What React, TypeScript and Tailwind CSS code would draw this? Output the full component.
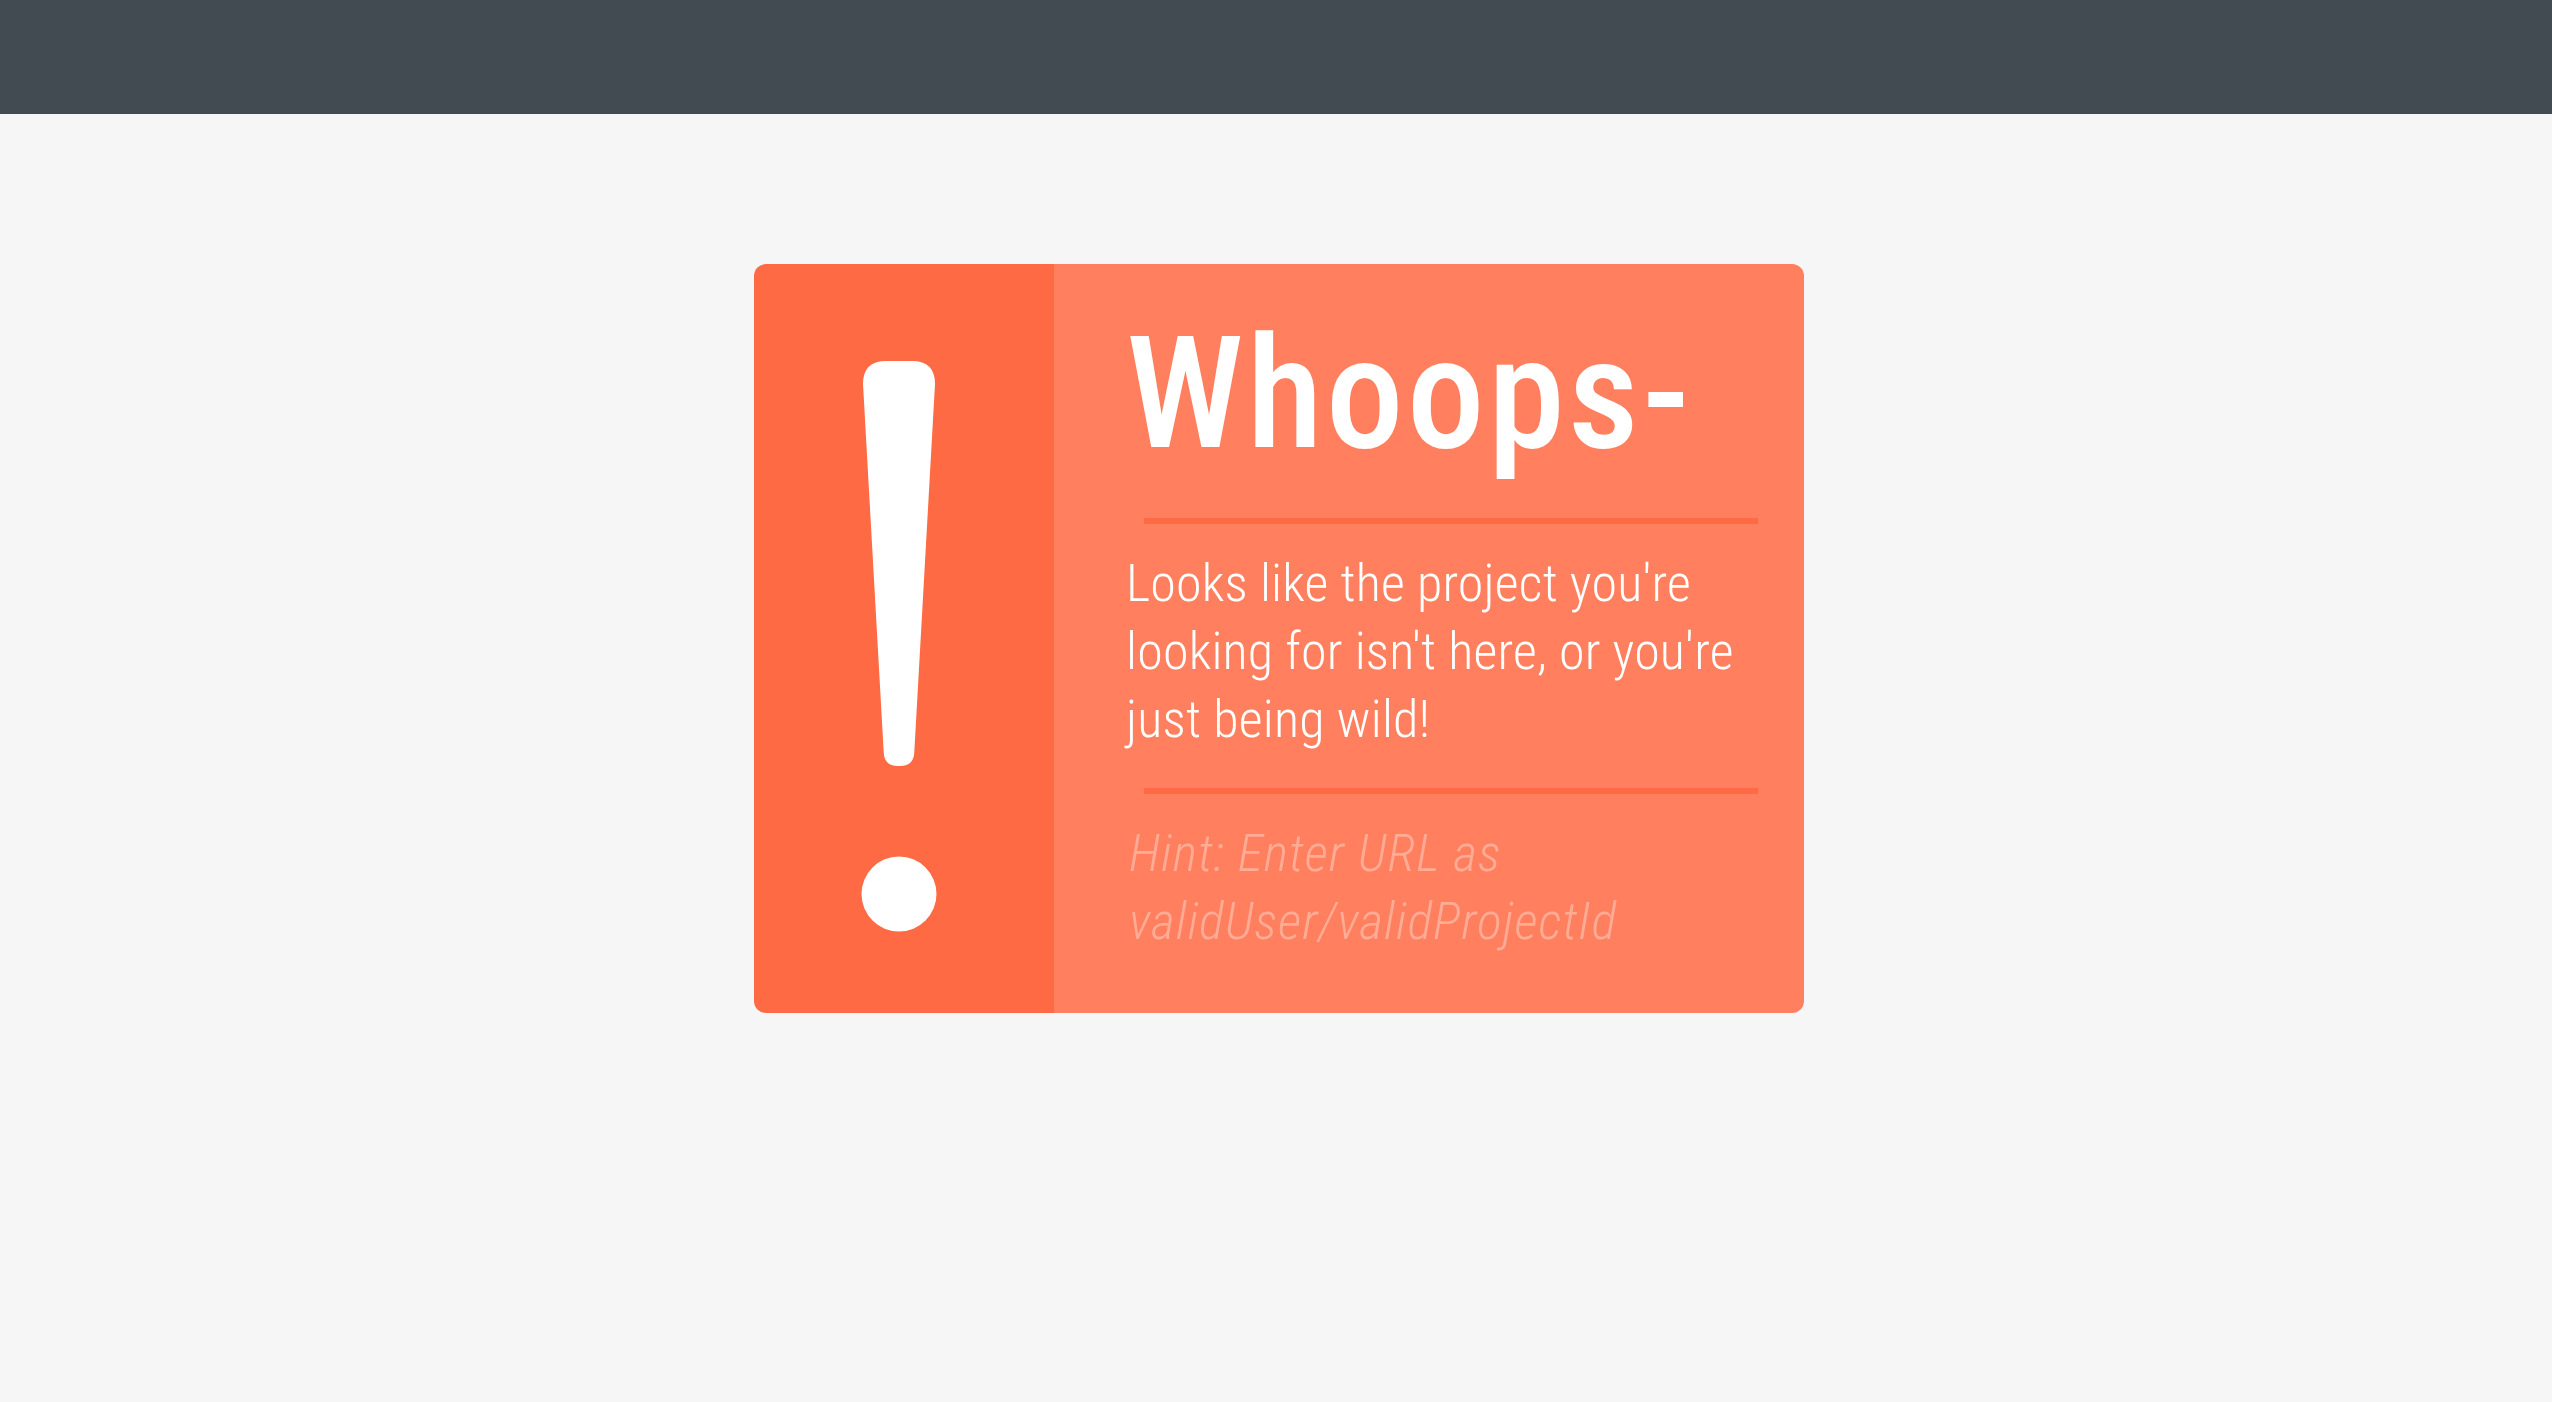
import React from "react";

const FONT = { fontFamily: '"Roboto Condensed", Roboto, "Liberation Sans", sans-serif' };

function ExclamationMark() {
  return (
    <svg width="76" height="571" viewBox="0 0 76 571" fill="#ffffff" aria-hidden="true">
      <path d="M2 23 Q2 0 25 0 L51 0 Q74 0 74 23 L53.3 391 Q53 405 39 405 L37 405 Q23 405 22.7 391 Z" />
      <circle cx="38" cy="533" r="37.5" />
    </svg>
  );
}

function Divider() {
  return <div className="mx-[18px] h-[6px] bg-[#fd6a43]" />;
}

export default function App() {
  return (
    <div className="min-h-screen bg-[#f6f6f6]" style={FONT}>
      <header className="h-[114px] bg-[#414b51]" />

      <main className="flex justify-center pl-[6px] pt-[150px]">
        <div className="flex w-[1050px] overflow-hidden rounded-[12px]">
          <div className="flex w-[300px] shrink-0 justify-center bg-[#fd6a43] pr-[10px] pt-[97px]">
            <ExclamationMark />
          </div>

          <div className="flex flex-1 flex-col bg-[#ff7f5e] pb-[57px] pl-[72px] pr-[28px] pt-[50px] text-white">
            <h1 className="text-[156px] font-medium leading-[160px] tracking-[3px]">Whoops-</h1>

            <div className="mt-[44px]">
              <Divider />
            </div>

            <p className="mt-[26px] text-[52px] font-light leading-[68px] tracking-[0.2px]">
              Looks like the project you're looking for isn't here, or you're just being wild!
            </p>

            <div className="mt-[34px]">
              <Divider />
            </div>

            <p className="mt-[26px] pl-[3px] text-[52px] font-light italic leading-[68px] tracking-[1px] text-white/35">
              Hint: Enter URL as validUser/validProjectId
            </p>
          </div>
        </div>
      </main>
    </div>
  );
}
